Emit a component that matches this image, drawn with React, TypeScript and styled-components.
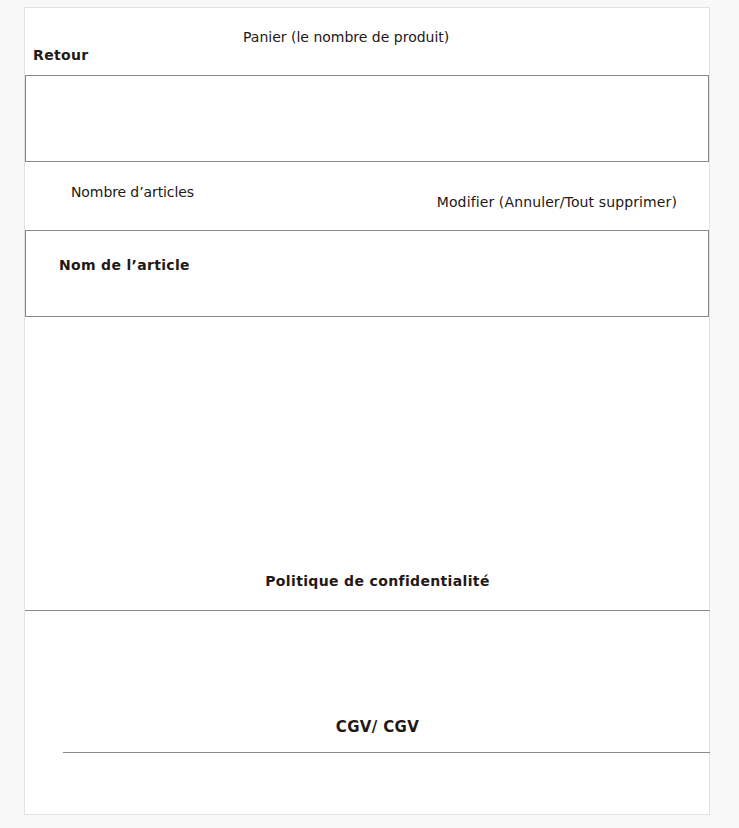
import React from "react";
import styled, { createGlobalStyle } from "styled-components";

const GlobalStyle = createGlobalStyle`
  html, body {
    margin: 0;
    padding: 0;
    background: #f8f8f8;
  }
  body {
    font-family: "DejaVu Sans", Verdana, sans-serif;
    color: #231815;
  }
`;

const Card = styled.div`
  box-sizing: border-box;
  margin: 7px 0 0 24px;
  width: 686px;
  height: 808px;
  background: #ffffff;
  border: 1px solid #e2e2e2;
  display: flex;
  flex-direction: column;
`;

const Header = styled.header`
  box-sizing: border-box;
  height: 67px;
  padding-top: 21px;
  display: flex;
  flex-direction: column;
  align-items: flex-start;
`;

const Title = styled.div`
  margin-left: 218px;
  font-size: 14px;
  line-height: 17px;
`;

const BackLink = styled.a`
  margin: 1px 0 0 8px;
  font-size: 14px;
  line-height: 17px;
  font-weight: bold;
  letter-spacing: 0.35px;
  color: #231815;
  text-decoration: none;
`;

const Panel = styled.section`
  box-sizing: border-box;
  height: 87px;
  border: 1px solid #888888;
  flex-shrink: 0;
`;

const ItemName = styled.div`
  padding: 26px 0 0 33px;
  font-size: 14px;
  line-height: 17px;
  font-weight: bold;
  letter-spacing: 0.32px;
`;

const CountRow = styled.div`
  box-sizing: border-box;
  height: 68px;
  display: flex;
  justify-content: space-between;
  align-items: flex-start;
  padding: 22px 32px 0 46px;
`;

const Label = styled.span<{ $offset?: number; $spacing?: number }>`
  margin-top: ${(p) => p.$offset ?? 0}px;
  font-size: 14px;
  line-height: 17px;
  letter-spacing: ${(p) => p.$spacing ?? 0}px;
`;

const FooterLink = styled.div<{
  $top: number;
  $bottom: number;
  $indent?: number;
  $shift: number;
  $size?: number;
}>`
  box-sizing: border-box;
  margin-left: ${(p) => p.$indent ?? 0}px;
  margin-right: -1px;
  padding: ${(p) => p.$top}px ${(p) => (p.$shift < 0 ? -p.$shift : 0)}px ${(p) => p.$bottom}px
    ${(p) => (p.$shift > 0 ? p.$shift : 0)}px;
  border-bottom: 1px solid #8a8a8a;
  text-align: center;
  font-size: ${(p) => p.$size ?? 14}px;
  line-height: 17px;
  font-weight: bold;
  letter-spacing: 0.35px;
`;

export default function App() {
  return (
    <>
      <GlobalStyle />
      <Card>
        <Header>
          <Title>Panier (le nombre de produit)</Title>
          <BackLink href="#">Retour</BackLink>
        </Header>
        <Panel />
        <CountRow>
          <Label $spacing={-0.1}>Nombre d’articles</Label>
          <Label $offset={10} $spacing={0.12}>
            Modifier (Annuler/Tout supprimer)
          </Label>
        </CountRow>
        <Panel>
          <ItemName>Nom de l’article</ItemName>
        </Panel>
        <FooterLink $top={256} $bottom={20} $shift={20}>
          Politique de confidentialité
        </FooterLink>
        <FooterLink $top={108} $bottom={16} $indent={38} $shift={-18} $size={15}>
          CGV/ CGV
        </FooterLink>
      </Card>
    </>
  );
}
